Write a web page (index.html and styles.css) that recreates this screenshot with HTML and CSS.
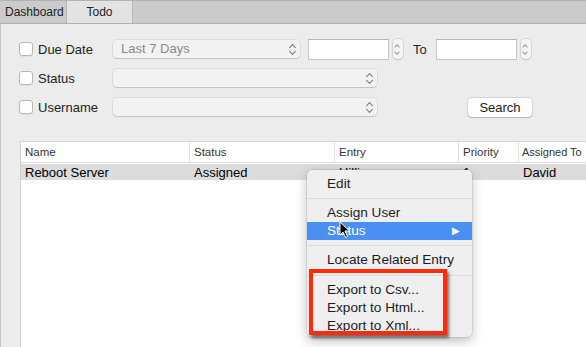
FILE: index.html
```html
<!DOCTYPE html>
<html lang="en">
<head>
    <meta charset="UTF-8">
    <title>Todo</title>
    <link rel="stylesheet" href="styles.css">
</head>
<body>

    <div class="tabs">
        <div class="tab">Dashboard</div>
        <div class="tab active">Todo</div>
    </div>

    <div class="content">
        <div class="filters">
            <div class="row">
                <label class="check"><span class="box"></span>Due Date</label>
                <div class="select wide">Last 7 Days<span class="chev"></span></div>
                <div class="field"></div>
                <div class="stepper"><span class="chev small"></span></div>
                <span class="to">To</span>
                <div class="field"></div>
                <div class="stepper"><span class="chev small"></span></div>
            </div>
            <div class="row">
                <label class="check"><span class="box"></span>Status</label>
                <div class="select long"><span class="chev"></span></div>
            </div>
            <div class="row">
                <label class="check"><span class="box"></span>Username</label>
                <div class="select long"><span class="chev"></span></div>
                <button class="btn">Search</button>
            </div>
        </div>

        <div class="table">
            <div class="thead">
                <div class="col c-name">Name</div>
                <div class="col c-status">Status</div>
                <div class="col c-entry">Entry</div>
                <div class="col c-prio">Priority</div>
                <div class="col c-user">Assigned To</div>
            </div>
            <div class="trow selected">
                <div class="col c-name">Reboot Server</div>
                <div class="col c-status">Assigned</div>
                <div class="col c-entry">Hilli</div>
                <div class="col c-prio">1</div>
                <div class="col c-user">David</div>
            </div>
        </div>
    </div>

    <div class="menu">
        <div class="item">Edit</div>
        <div class="sep"></div>
        <div class="item">Assign User</div>
        <div class="item hl">Status<span class="arrow">&#9654;</span></div>
        <div class="sep"></div>
        <div class="item">Locate Related Entry</div>
        <div class="sep last"></div>
        <div class="item">Export to Csv...</div>
        <div class="item">Export to Html...</div>
        <div class="item">Export to Xml...</div>
        <div class="mark"></div>
    </div>

    <svg class="cursor" width="12" height="18" viewBox="0 0 12 18">
        <path d="M1 1 L1 14 L4 11 L6.5 16.5 L8.5 15.5 L6 10 L10.5 10 Z" fill="#000" stroke="#fff" stroke-width="1"/>
    </svg>

</body>
</html>
```

FILE: styles.css
```css
body {
    margin: 0;
    width: 586px;
    height: 347px;
    overflow: hidden;
    background-color: #ececec;
    font-family: "Liberation Sans", Arial, sans-serif;
    color: #222;
    position: relative;
}
.tabs {
    display: flex;
    height: 24px;
    background-color: #cbcbcb;
    border-top: 1px solid #b3b3b3;
    border-bottom: 1px solid #b0b0b0;
    box-sizing: border-box;
}
.tab {
    width: 66px;
    font-size: 12px;
    line-height: 22px;
    padding-left: 5px;
    box-sizing: border-box;
}
.tab.active {
    background-color: #e3e3e3;
    border-left: 1px solid #b5b5b5;
    border-right: 1px solid #b5b5b5;
    text-align: center;
    padding-left: 0;
    width: 67px;
}
.content {
    border-left: 1px solid #c4c4c4;
    height: 323px;
    box-sizing: border-box;
}
.filters {
    padding: 15px 0 0 18px;
    display: flex;
    flex-direction: column;
    gap: 9px;
}
.row {
    display: flex;
    align-items: center;
    height: 20px;
}
.check {
    display: flex;
    align-items: center;
    width: 94px;
    font-size: 13px;
    flex-shrink: 0;
}
.box {
    width: 12px;
    height: 12px;
    background-color: #fff;
    border: 1px solid #b8b8b8;
    border-radius: 3px;
    margin-right: 5px;
    box-shadow: 0 1px 1px rgba(0, 0, 0, 0.05);
}
.select {
    position: relative;
    height: 18px;
    background-color: #f2f2f2;
    border-radius: 4px;
    box-shadow: 0 0 0 0.5px rgba(0, 0, 0, 0.12), 0 1px 1px rgba(0, 0, 0, 0.12);
    font-size: 13px;
    color: #8a8a8a;
    line-height: 18px;
    padding-left: 8px;
    box-sizing: border-box;
}
.select.wide {
    width: 187px;
}
.select.long {
    width: 264px;
}
.chev {
    position: absolute;
    right: 5px;
    top: 4px;
    width: 5px;
    height: 10px;
}
.chev::before, .chev::after {
    content: "";
    position: absolute;
    left: 0;
    width: 4px;
    height: 4px;
    border-left: 1px solid #777;
    border-top: 1px solid #777;
}
.chev::before {
    top: 1px;
    transform: rotate(45deg);
}
.chev::after {
    top: 5px;
    transform: rotate(225deg);
}
.chev.small {
    right: 3px;
    top: 5px;
}
.chev.small::before, .chev.small::after {
    width: 3px;
    height: 3px;
    border-color: #999;
}
.chev.small::after {
    top: 6px;
}
.field {
    width: 81px;
    height: 21px;
    background-color: #fff;
    border: 1px solid #c8c8c8;
    border-top-color: #b5b5b5;
    box-sizing: border-box;
    margin-left: 8px;
}
.stepper {
    width: 10px;
    height: 20px;
    margin-left: 4px;
    background-color: #f4f4f4;
    border-radius: 4px;
    box-shadow: 0 0 0 0.5px rgba(0, 0, 0, 0.18), 0 1px 1px rgba(0, 0, 0, 0.1);
    position: relative;
}
.to {
    font-size: 13px;
    margin: 0 9px 0 10px;
}
.to + .field {
    margin-left: 0;
}
.btn {
    margin-left: 91px;
    width: 64px;
    height: 19px;
    background-color: #fff;
    border: none;
    border-radius: 4px;
    box-shadow: 0 0 0 0.5px rgba(0, 0, 0, 0.2), 0 1px 1px rgba(0, 0, 0, 0.15);
    font-family: "Liberation Sans", Arial, sans-serif;
    font-size: 13px;
    color: #222;
    padding: 0;
}
.table {
    margin: 24px 0 0 19px;
    height: 210px;
    background-color: #fff;
    border-left: 1px solid #d0d0d0;
    border-top: 1px solid #d6d6d6;
    overflow: hidden;
}
.thead, .trow {
    display: flex;
}
.thead {
    height: 20px;
    border-bottom: 1px solid #dcdcdc;
    font-size: 11.5px;
    color: #333;
    line-height: 20px;
}
.thead .col + .col {
    border-left: 1px solid #e0e0e0;
}
.thead .c-user {
    font-size: 11px;
    padding-left: 3px;
}
.trow {
    margin-top: 1px;
    height: 16px;
    font-size: 13px;
    line-height: 17px;
    color: #000;
}
.trow.selected {
    background-color: #dcdcdc;
}
.col {
    flex-shrink: 0;
    padding-left: 4px;
    box-sizing: border-box;
    white-space: nowrap;
    overflow: hidden;
}
.trow .col + .col {
    padding-left: 5px;
}
.c-name { width: 168px; }
.c-status { width: 145px; }
.c-entry { width: 124px; }
.c-prio { width: 60px; }
.c-user { width: 68px; }

.menu {
    position: absolute;
    left: 307px;
    top: 170px;
    width: 165px;
    padding: 5px 0 2px;
    background-color: #efefef;
    border-radius: 5px;
    box-shadow: 0 0 0 0.5px rgba(0, 0, 0, 0.15), 0 4px 12px rgba(0, 0, 0, 0.25);
    font-size: 13.6px;
    color: #1c1c1c;
}
.item {
    height: 18px;
    line-height: 18px;
    padding-left: 20px;
    position: relative;
}
.item.hl {
    background-color: #4a90f2;
    color: #fff;
}
.arrow {
    position: absolute;
    right: 12px;
    font-size: 10px;
}
.sep {
    height: 1px;
    background-color: #dcdcdc;
    margin: 5px 0 5px;
}
.sep.last {
    margin-top: 6px;
}
.mark {
    position: absolute;
    left: 2px;
    top: 99px;
    width: 138px;
    height: 66px;
    border: 4px solid #fe2a0a;
    box-sizing: border-box;
    box-shadow: 2px 3px 3px rgba(0, 0, 0, 0.55);
}
.cursor {
    position: absolute;
    left: 339px;
    top: 221px;
}
```
